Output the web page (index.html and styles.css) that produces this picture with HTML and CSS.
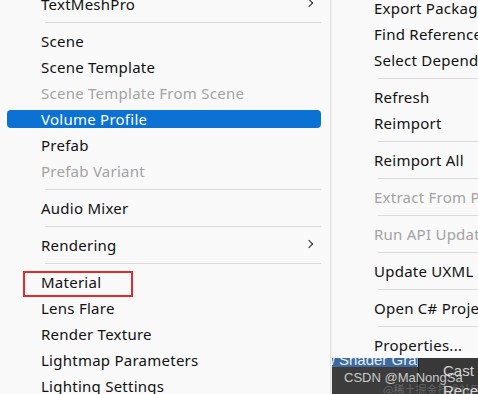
FILE: index.html
```html
<!DOCTYPE html>
<html lang="en">
<head>
    <meta charset="UTF-8">
    <title>Create Menu</title>
    <link rel="stylesheet" href="styles.css">
</head>
<body>
    <div class="screen">
        <div class="menu left-menu">
            <div class="item">TextMeshPro<span class="arrow"></span></div>
            <div class="sep"></div>
            <div class="item">Scene</div>
            <div class="item">Scene Template</div>
            <div class="item off">Scene Template From Scene</div>
            <div class="item active">Volume Profile</div>
            <div class="item">Prefab</div>
            <div class="item off">Prefab Variant</div>
            <div class="sep"></div>
            <div class="item">Audio Mixer</div>
            <div class="sep"></div>
            <div class="item">Rendering<span class="arrow"></span></div>
            <div class="sep"></div>
            <div class="item"><span class="mark"></span>Material</div>
            <div class="item">Lens Flare</div>
            <div class="item">Render Texture</div>
            <div class="item">Lightmap Parameters</div>
            <div class="item">Lighting Settings</div>
        </div>
        <div class="right-col">
            <div class="menu right-menu">
                <div class="item">Export Package...</div>
                <div class="item">Find References In Scene</div>
                <div class="item">Select Dependencies</div>
                <div class="sep"></div>
                <div class="item">Refresh</div>
                <div class="item">Reimport</div>
                <div class="sep"></div>
                <div class="item">Reimport All</div>
                <div class="sep"></div>
                <div class="item off">Extract From Prefab</div>
                <div class="sep"></div>
                <div class="item off">Run API Updater...</div>
                <div class="sep"></div>
                <div class="item">Update UXML Schema</div>
                <div class="sep"></div>
                <div class="item">Open C# Project</div>
                <div class="sep"></div>
                <div class="item">Properties...</div>
            </div>
            <div class="editor">
                <div class="editor-left">
                    <div class="tab-strip">w Shader Graph</div>
                </div>
                <div class="editor-right">
                    <div class="cast">Cast</div>
                    <div class="cast">Rece</div>
                </div>
                <div class="wm">CSDN @MaNongSa</div>
                <div class="wm-cn">@稀土掘金技术社区</div>
            </div>
        </div>
    </div>
</body>
</html>
```

FILE: styles.css
```css
body {
    margin: 0;
    padding: 0;
    font-family: "Noto Sans", "Noto Sans CJK SC", sans-serif;
    background: #f9f9f9;
}
.screen {
    width: 478px;
    height: 394px;
    overflow: hidden;
    display: flex;
}
.menu {
    background: #f9f9f9;
    font-size: 15px;
    letter-spacing: 0.25px;
    color: #111;
}
.left-menu {
    width: 330px;
    flex: none;
    margin-top: -9px;
    border-right: 1px solid #e2e2e2;
    box-shadow: 1px 0 2px rgba(0, 0, 0, 0.06);
}
.item {
    position: relative;
    height: 26px;
    line-height: 26px;
    padding-left: 41px;
    white-space: nowrap;
}
.off {
    color: #a3a3a3;
}
.item.active {
    color: #fff;
    z-index: 0;
}
.item.active::before {
    content: "";
    position: absolute;
    left: 7px;
    top: 4px;
    width: 314px;
    height: 18px;
    border-radius: 4px;
    background: #0b72d4;
    z-index: -1;
}
.sep {
    height: 11px;
    box-sizing: border-box;
    padding-top: 5px;
    margin-left: 45px;
    margin-right: 9px;
}
.sep::after {
    content: "";
    display: block;
    height: 1px;
    background: #dadada;
}
.arrow {
    position: absolute;
    left: 306px;
    top: 9px;
    width: 5px;
    height: 5px;
    border-top: 1.5px solid #222;
    border-right: 1.5px solid #222;
    transform: rotate(45deg);
}
.mark {
    position: absolute;
    left: 23px;
    top: 2px;
    width: 106px;
    height: 22px;
    border: 2px solid #e02a2c;
}
.right-col {
    flex: 1;
    display: flex;
    flex-direction: column;
    overflow: hidden;
    margin-left: 1px;
}
.right-menu {
    margin-top: -5px;
    height: 363px;
    flex: none;
}
.right-menu .item {
    padding-left: 42px;
}
.right-menu .sep {
    margin-left: 46px;
    margin-right: 0;
}
.editor {
    position: relative;
    flex: 1;
    display: flex;
    background: #3a3a3a;
    font-family: "Liberation Sans", Arial, sans-serif;
}
.editor-left {
    width: 86px;
    border-right: 1px solid #1f1f1f;
    background: #3c3c3c;
}
.tab-strip {
    height: 9px;
    background: #3d6a9c;
    color: #e8eef5;
    font-size: 15px;
    line-height: 4px;
    white-space: nowrap;
    overflow: hidden;
    margin-left: -8px;
}
.editor-right {
    flex: 1;
    background: #383838;
    padding-left: 24px;
    padding-top: 3px;
    color: #d4d4d4;
    font-size: 15px;
}
.cast {
    line-height: 20px;
}
.wm {
    position: absolute;
    left: 12px;
    top: 12px;
    font-size: 13px;
    color: rgba(230, 230, 230, 0.85);
    white-space: nowrap;
}
.wm-cn {
    position: absolute;
    left: 51px;
    top: 23px;
    font-size: 11px;
    font-family: "Noto Sans CJK SC", sans-serif;
    color: rgba(255, 255, 255, 0.22);
    white-space: nowrap;
}
```
